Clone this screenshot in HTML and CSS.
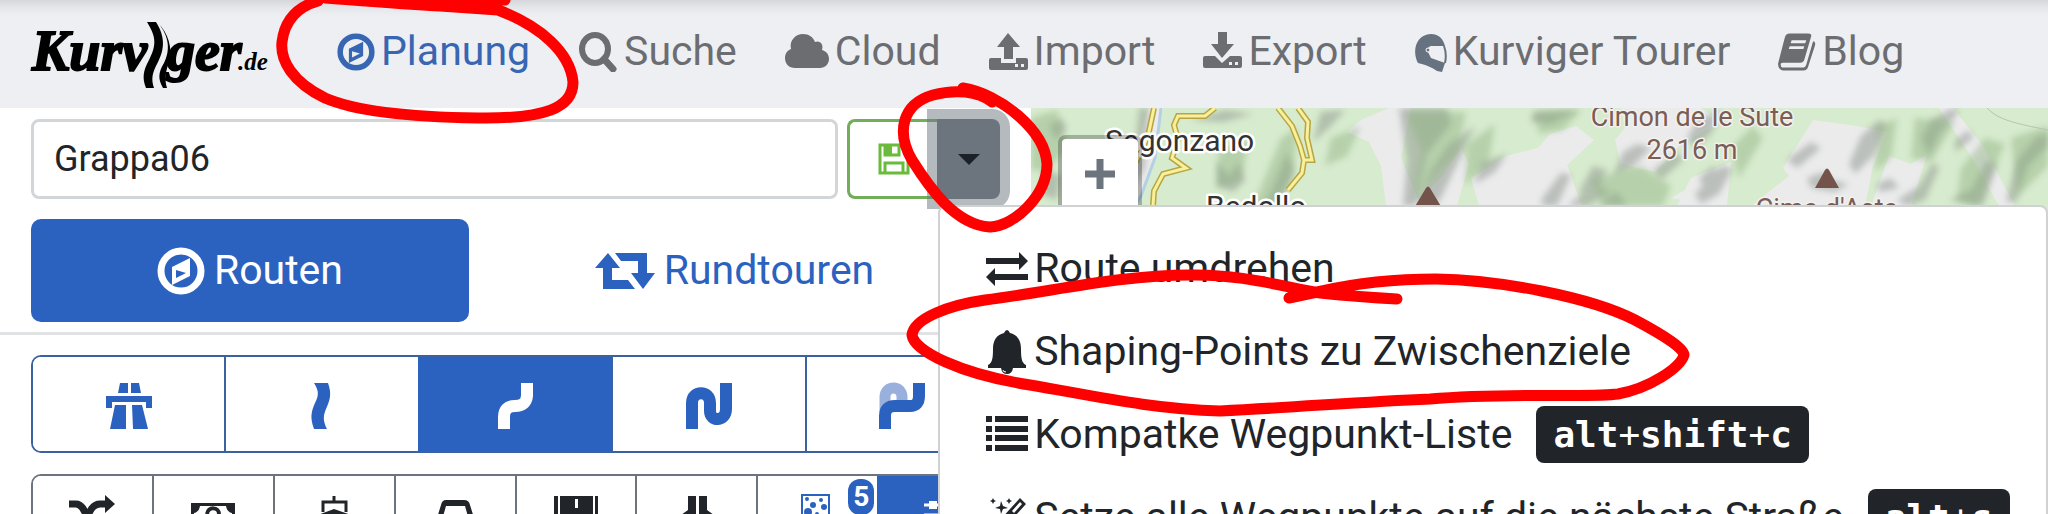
FILE: index.html
```html
<!DOCTYPE html>
<html lang="de">
<head>
<meta charset="UTF-8">
<meta name="viewport" content="width=device-width, initial-scale=1">
<title>Kurviger.de - Planung</title>
<link rel="stylesheet" href="styles.css">
</head>
<body>
<svg class="defs" width="0" height="0" aria-hidden="true">
  <symbol id="compass" viewBox="0 0 48 48">
    <circle cx="24" cy="24" r="20" fill="none" stroke="currentColor" stroke-width="7"/>
    <path fill="currentColor" fill-rule="evenodd" d="M33 11v18L15 38V20zM19 23v8l10-5z"/>
  </symbol>
</svg>

<header class="navbar">
  <a class="brand" href="#" aria-label="Kurviger.de">
    <svg width="240" height="76" viewBox="0 0 240 76">
      <text class="logo" x="4" y="52">Kurv</text>
      <path d="M119 4h9c10 16 8 28 2 40-6 11-7 17-4 26h-8c-4-10-3-17 3-28 7-14 8-22-2-38z"/>
      <path d="M130 5c12 14 12 28 6 40-6 10-6 16-1 25h4c-3-10-1-17 2-26 4-14-1-29-11-39z"/>
      <text class="logo" x="139" y="52">ger</text>
      <text class="logo_de" x="210" y="52">.de</text>
    </svg>
  </a>
  <nav class="nav">
    <a class="active" href="#"><svg width="38" height="38"><use href="#compass"/></svg>Planung</a>
    <a href="#"><svg width="40" height="40" viewBox="0 0 40 40"><ellipse cx="17" cy="17" rx="13" ry="14" fill="none" stroke="currentColor" stroke-width="6"/><path d="M26 27l9 10" stroke="currentColor" stroke-width="7" stroke-linecap="round"/></svg>Suche</a>
    <a href="#"><svg width="44" height="40" viewBox="0 0 44 40"><path fill="currentColor" d="M10 36C4 36 0 32 0 26c0-5 3-8 6-9C4 8 11 2 18 2c6 0 10 3 12 8 5-2 9 2 7 8 4 1 7 4 7 9 0 5-4 9-9 9z"/></svg>Cloud</a>
    <a href="#"><svg width="39" height="40" viewBox="0 0 39 40"><path fill="currentColor" fill-rule="evenodd" d="M19 1l12 14h-7v12h-9V15H8zM2 26h10v5h15v-5h10q2 0 2 2v8q0 2-2 2H2q-2 0-2-2v-8q0-2 2-2zM26 32v3h3v-3zM32 32v3h3v-3z"/></svg>Import</a>
    <a href="#"><svg width="39" height="40" viewBox="0 0 39 40"><path fill="currentColor" fill-rule="evenodd" d="M15 0h9v12h7L19 26 8 12h7zM2 24h10l7 7 8-7h10q2 0 2 2v8q0 2-2 2H2q-2 0-2-2v-8q0-2 2-2zM26 30v3h3v-3zM32 30v3h3v-3z"/></svg>Export</a>
    <a href="#"><svg width="32" height="40" viewBox="0 0 32 40"><path fill="#66727f" d="M16 2c7 0 12 4 14 12H16q-4 1-3 6l3 6 14 5-3 9-5-1C16 35 11 33 3 31-3 20 0 3 16 2z"/><path fill="none" stroke="#66727f" stroke-width="2" d="M29 14q3 8 1 17"/><circle cx="13" cy="18" r="2" fill="#66727f" stroke="#fff"/></svg>Kurviger Tourer</a>
    <a href="#"><svg width="38" height="40" viewBox="0 0 39 40"><path fill="currentColor" fill-rule="evenodd" d="M12 1h19q4 0 3 3l-7 24q-1 3-4 3H5q-3 0-2 3 0 2 3 2h19q3 0 4-3l7-24q3 1 2 4l-7 22q-1 4-5 4H5q-5-1-5-7L7 5q1-4 5-4zM14 8l-1 3h15l1-3zM12 14l-1 3h15l1-3z"/></svg>Blog</a>
  </nav>
</header>

<main class="main">
  <section class="sidebar">
    <div class="row name_row">
      <input class="text" type="text" value="Grappa06" aria-label="Routenname">
      <div class="btn_group">
        <button class="save" type="button" aria-label="Speichern"><svg width="32" height="32" viewBox="0 0 32 32"><path fill="none" stroke="currentColor" stroke-width="3" d="M2 2h21l7 7v21H2zM7 2v10h14V2M7 30V20h18v10"/><path fill="currentColor" d="M6 1h8v11H6z"/></svg></button>
        <div class="dropdown">
          <button class="toggle" type="button" aria-label="Weitere Aktionen" aria-expanded="true"><i class="caret"></i></button>
          <ul class="menu">
            <li><a href="#"><svg width="42" height="42" viewBox="0 0 42 42"><path fill="currentColor" d="M0 10h33V4l9 9-9 9v-6H0zM42 26H9v-6L0 29l9 9v-6h33z"/></svg>Route umdrehen</a></li>
            <li><a href="#"><svg width="42" height="44" viewBox="0 0 42 44"><path fill="currentColor" d="M18 3q3-6 6 0c8 2 11 8 11 16 0 10 1 14 5 16v3H2v-3c4-2 5-6 5-16C7 11 10 5 18 3zM15 38h12q-1 6-6 6t-6-6z"/><path d="M17 40q0 2 3 2" fill="none" stroke="#fff"/></svg>Shaping-Points zu Zwischenziele</a></li>
            <li><a href="#"><svg width="42" height="42" viewBox="0 0 42 42"><path fill="currentColor" d="M0 2h6v6H0zM9 2h33v6H9zM0 12h6v6H0zM9 12h33v6H9zM0 21h6v6H0zM9 21h33v6H9zM0 31h6v6H0zM9 31h33v6H9z"/></svg>Kompatke Wegpunkt-Liste <kbd><b>alt</b>+<b>shift</b>+<b>c</b></kbd></a></li>
            <li><a href="#"><svg width="42" height="42" viewBox="0 0 42 42"><path fill="currentColor" fill-rule="evenodd" d="M34 1l6 6L10 40l-6-6zM34 5l-8 9 2 2 8-9zM15 4l2 5 5 2-5 1-2 5-1-5-5-1 5-2zM7 1l1 2 2 1-2 1-1 2-1-2-2-1 2-1zM23 1l1 2 2 1-2 1-1 2-1-2-2-1 2-1zM37 18l1 2 2 1-2 1-1 2-1-2-2-1 2-1z"/></svg>Setze alle Wegpunkte auf die nächste Straße <kbd><b>alt</b>+<b>s</b></kbd></a></li>
          </ul>
        </div>
      </div>
    </div>

    <div class="row tabs">
      <button class="tab on" type="button"><svg width="48" height="48"><use href="#compass"/></svg>Routen</button>
      <button class="tab" type="button"><svg width="60" height="36" viewBox="0 0 60 36"><path fill="currentColor" d="M13 0l12 15h-8v12h16l7 9H8V15H0zM20 0h32v20h8L48 36 36 20h7V8H26z"/></svg>Rundtouren</button>
    </div>

    <div class="options">
      <div class="group curves">
        <button type="button" aria-label="Schnellste"><svg width="48" height="48" viewBox="0 0 48 48"><path fill="currentColor" d="M15 1h8v10H13zM26 1h8l2 10H26zM1 14h46v12h-6v-6H7v6H1zM10 23h11v24H5zM27 23h10l6 24H28z"/></svg></button>
        <button type="button" aria-label="Schnell und kurvig"><svg width="48" height="48" viewBox="0 0 48 48"><path fill="currentColor" d="M16 1h14c4 11 2 17-2 26-3 7-3 12 1 20H16c-4-11-3-17 1-26 4-8 4-12-1-20z"/></svg></button>
        <button class="on" type="button" aria-label="Kurvig"><svg width="48" height="48" viewBox="0 0 48 48"><path fill="none" stroke="currentColor" stroke-width="12" d="M12 47V35q0-11 11-11t12-10V1"/></svg></button>
        <button type="button" aria-label="Extrakurvig"><svg width="48" height="48" viewBox="0 0 48 48"><path fill="none" stroke="currentColor" stroke-width="12" d="M7 47V21c0-13 18-13 18 0v8c0 11 16 11 16-2V1"/></svg></button>
        <button type="button" aria-label="Keine Mautstraßen"><svg width="48" height="48" viewBox="0 0 48 48"><path fill="none" stroke="#9ab0dc" stroke-width="11" d="M7 30V15c0-12 17-12 17 0v4"/><path fill="none" stroke="currentColor" stroke-width="12" d="M7 47V34q0-10 10-10h15q9 0 9-10V1"/></svg></button>
      </div>

      <div class="group avoid">
        <button type="button" aria-label="Alternativen"><svg width="48" height="48" viewBox="0 0 48 48"><path fill="none" stroke="currentColor" stroke-width="7" d="M1 9h7c12 0 10 26 22 26h8M1 35h7c12 0 10-26 24-26h6"/><path fill="currentColor" d="M37 0l10 9-10 9zM37 26l10 9-10 9z"/></svg></button>
        <button type="button" aria-label="Maut vermeiden"><svg width="48" height="48" viewBox="0 0 48 48"><path fill="currentColor" fill-rule="evenodd" d="M2 8h44v30H2zM11 11q-1 6-6 7v11q5 1 6 6h26q1-5 6-6V18q-5-1-6-7z"/><path fill="none" stroke="currentColor" stroke-width="4" d="M18 19c1-8 12-7 12 0 0 5-6 4-6 11"/></svg></button>
        <button type="button" aria-label="Fähren vermeiden"><svg width="48" height="48" viewBox="0 0 48 48"><path fill="none" stroke="currentColor" stroke-width="3" d="M24 1v6M13 17V7h23v10"/><path fill="currentColor" d="M24 14l20 7-5 18H10L5 21z"/></svg></button>
        <button type="button" aria-label="Tunnel vermeiden"><svg width="48" height="48" viewBox="0 0 48 48"><path fill="currentColor" fill-rule="evenodd" d="M15 5h18q5 0 6 5l5 16v16H5V26l5-16q1-5 5-5zM15 11l-4 14h27l-4-14z"/></svg></button>
        <button type="button" aria-label="Autobahnen vermeiden"><svg width="48" height="48" viewBox="0 0 48 48"><path fill="currentColor" fill-rule="evenodd" d="M2 1h4v46H2zM8 1h33v46H8zM43 1h3v46h-3zM23 4v9h3V4zM23 19v9h3v-9z"/></svg></button>
        <button type="button" aria-label="Bundesstraßen vermeiden"><svg width="48" height="48" viewBox="0 0 48 48"><path fill="currentColor" d="M15 1h8v46H8V20l7-5zM26 1h8v14l7 5v27H26z"/></svg></button>
        <button type="button" aria-label="Unbefestigte Straßen vermeiden"><svg class="gravel" width="30" height="50" viewBox="0 0 30 50"><path fill="none" stroke="#2b62bf" stroke-width="2" d="M1 1h27v48H1z"/><g fill="#2b62bf"><circle cx="6" cy="5" r="2"/><circle cx="20" cy="6" r="2"/><circle cx="12" cy="11" r="3"/><circle cx="23" cy="13" r="3"/><circle cx="7" cy="18" r="4"/><circle cx="16" cy="20" r="2"/></g></svg><span class="badge">5</span></button>
        <button class="on" type="button" aria-label="Einstellungen"><svg width="30" height="48" viewBox="0 0 30 48"><path stroke="currentColor" stroke-width="3" d="M0 10h30M0 20h30"/><path fill="currentColor" d="M5 6h8v8H5z"/></svg></button>
      </div>
    </div>
  </section>

  <section class="map" aria-label="Karte">
    <svg class="terrain" viewBox="0 0 1017 406" preserveAspectRatio="xMinYMin slice">
      <defs>
        <filter id="soft" x="-20%" y="-20%" width="140%" height="140%"><feGaussianBlur stdDeviation="3"/></filter>
      </defs>
      <rect width="1017" height="406" fill="#d7ebce"/>
      <!-- rock -->
      <g fill="#ebebec">
        <path d="M118 0h14l-8 45-19 53H95l-5-20z"/>
        <path d="M330 12l28-12h22l-10 50 20 48h-35l-5-40-12-24-22-10zM380 98l30-28 20-30 8 16-12 42z"/>
        <path d="M448 98l-8-28 35-22 32-8 12-14 26-8 18 14-30 28-22 38zM590 0h80l20 14-40 22-26 28-34-8-6-24 10-12z"/>
        <path d="M505 40l30 14 16 44h-62zM660 70l40-16-4 44h-50zM640 90l25-14 20 22z"/>
        <path d="M752 60l30-48 44 6 30 6-14 34-8 40H720l38-30zM858 48l22 8 16-10-16 52h-40zM908 0h14l30 38 32 60h-16l-28-50z"/>
      </g>
      <!-- hill shading -->
      <g filter="url(#soft)" fill="#8c948c" opacity=".5">
        <path d="M18 18l12-8 6 10-10 12zM12 60l18 8-4 24-16-6zM108 0h10l-4 60-14 24 4-40zM88 70l14-10-6 38H84z"/>
        <path d="M186 52l12 16 10-14 6 18-12 12-16-6zM160 12l34-10 28 4-30 8zM240 84l16-40 7 18-14 36h-17zM290 4l24-2-14 16-18 16z"/>
        <path d="M368 0h48l4 16-24 30-12 52h-12l4-46zM400 62l18-26 26-18-12 26-24 50h-24zM450 54l26-8-12 18-20 12z"/>
        <path d="M502 4l46-2-28 14-20-2zM510 92l20-27 10 2-14 31h-14zM548 84l14-26 14 4-12 26zM566 96l20-12 10 14z"/>
        <path d="M592 44l14-8 14 4-20 20-18 8zM622 62l24-18 6 8-22 20zM656 30l12-20 22-6-10 22-16 14zM536 98l26-20 18 4-22 16z"/>
        <path d="M664 86l26-28 12 2-14 26-18 10zM668 70l14-12 4 6-14 14zM756 52l24-18 10 6-24 20zM776 70l16-6 8 8 18 4-14 8-24-4z"/>
        <path d="M818 56l12-28 18-16 8 4-14 32-18 18zM846 76l14-6 8 10-20 4zM866 92l22-14 14-24 6 6-14 32-18 6z"/>
        <path d="M890 30l10-18 22-12 6 4-18 20-12 24zM924 32l14-10 4 8-18 14zM918 92l22-10 16-30 10 4-14 42zM986 52l18-22 13-6v14l-20 20-12 36h-10z"/>
      </g>
      <g filter="url(#soft)" fill="#8fb181" opacity=".45">
        <path d="M375 4h60l-8 40-20 20-26 28 10-48zM436 36l28-20-6 36-24 26zM504 4l46-2-18 20-24 4zM560 72l50-14 30 20-8 20h-60zM700 40l22-22 10 12-24 40zM846 20l20-10-6 40-16 14zM884 10l40 4-24 40-20-4zM930 60l24-30 20 6-28 62-20-6zM980 30l37-12v40l-30 30z"/>
        <path d="M0 10l26-8 10 40-22 20H0zM188 40l30-8-8 40-24 8zM250 30l16-10-4 50-20 28h-20zM300 30l30-12-14 30-22 10z"/>
      </g>
      <path d="M130 0l-6 50-14 38-6 10" fill="none" stroke="#b4d0e4" stroke-width="3"/>
      <path d="M956 0c10 10 20 14 61 22" fill="none" stroke="#b8c4b0" stroke-width="1"/>
      <!-- roads -->
      <g fill="none" stroke="#b7a545" stroke-width="6"><path d="M123 0l-6 28-12 26M184 0l-10 8h-27l-4 9 4 14-6 19 14 10-23 6-9 17-1 15M247 0l14 18 8 20 4 14-2 13-14 17M267 0l10 14-1 16 5 22h-8"/></g>
      <g fill="none" stroke="#f8f09a" stroke-width="3"><path d="M123 0l-6 28-12 26M184 0l-10 8h-27l-4 9 4 14-6 19 14 10-23 6-9 17-1 15M247 0l14 18 8 20 4 14-2 13-14 17M267 0l10 14-1 16 5 22h-8"/></g>
      <path fill="#74544a" d="M395 80q2-3 4 0l12 20h-28zM794 62q2-3 4 0l10 18h-24z"/>
      <text class="place" x="74" y="43">Segonzano</text>
      <text class="place" x="175" y="109">Bedollo</text>
      <text class="peak" x="661" y="18" text-anchor="middle">Cimon de le Sute</text>
      <text class="peak" x="661" y="51" text-anchor="middle">2616 m</text>
      <text class="peak" x="796" y="110" text-anchor="middle">Cima d'Asta</text>
    </svg>
    <button class="zoom_in" type="button" aria-label="Vergrößern"><svg width="30" height="30" viewBox="0 0 30 30"><path d="M15 0v30M0 15h30" stroke="currentColor" stroke-width="7"/></svg></button>
  </section>
</main>

<!-- pen marks -->
<svg class="pen" viewBox="0 0 2048 514" preserveAspectRatio="xMinYMin meet" aria-hidden="true">
  <path d="M430-2L505 0M325-2C370 1 400 4 440 6T498 10C540 26 570 52 573 82C573 108 545 119 478 118C405 117 355 111 325 98C292 82 280 60 282 42Q286 10 318 1"/>
  <path d="M963 88C1000 94 1045 130 1047 164C1047 195 1015 226 990 227C955 225 929 187 912 160C896 132 902 104 933 95C955 89 978 91 992 102"/>
  <path d="M1289 298L1322 291C1365 281 1400 279 1436 279C1500 280 1590 297 1635 320Q1684 346 1684 355C1680 368 1650 388 1618 394C1590 398 1510 392 1430 399C1360 402 1300 407 1220 411C1150 409 1090 395 1030 385C960 374 914 351 912 335C914 318 950 305 985 300C1050 292 1120 275 1190 275C1240 274 1280 286 1320 293Q1360 297 1397 299"/>
</svg>
</body>
</html>
```
FILE: styles.css
```css
*{ padding:0; margin:0; box-sizing:border-box;}
body{ height:100vh; display:flex; flex-direction:column; overflow:hidden; background:#fff; color:#212529; font:41px/1.5 Roboto,"Open Sans",sans-serif;}
button,input{ font:inherit; color:inherit;}
button{ cursor:pointer;}
a{ color:inherit; text-decoration:none;}
ul{ list-style:none;}
svg{ display:block; flex:none;}
.defs{ position:absolute;}

/*navbar*/
.navbar{ position:relative; z-index:2; flex:none; display:flex; align-items:center; gap:69px; height:108px; padding:0 28px 4px; background:linear-gradient(#d6d7da,#e6e7eb 8px,#eeeff3 16px);}
.brand{ padding-top:8px;}
.logo,.logo_de{ font-family:"Liberation Serif",serif; font-weight:bold; font-style:italic; fill:#000;}
.logo{ font-size:56px; stroke:#000; stroke-width:2px;}
.logo_de{ font-size:25px;}
.nav{ display:flex; gap:48px; color:#6c6d70; white-space:nowrap;}
.nav a{ display:flex; align-items:center; gap:6px;}
.nav .active{ color:#3766b2;}

/*sidebar*/
.main{ flex:1; min-height:0; display:flex;}
.sidebar{ position:relative; z-index:1; width:50.35%; flex:none; background:#fff;}
.row{ display:flex; margin:0 31px;}
.name_row{ gap:9px; margin-top:11px; height:80px;}
.text{ flex:1; min-width:0; padding:0 20px; border:3px solid #d3d6d9; border-radius:8px; background:#fff; font-size:36px; outline:none;}
.btn_group{ display:flex;}
.save{ width:90px; padding-left:28px; border:3px solid #72ad58; border-right:0; border-radius:8px 0 0 8px; background:#fff; color:#6aba3c;}
.dropdown{ position:relative; z-index:2; display:flex;}
.toggle{ display:flex; align-items:center; justify-content:center; width:63px; border:0; border-radius:0 8px 8px 0; background:#6c757d; box-shadow:0 0 0 10px rgba(108,117,125,.5);}
.caret{ border:11px solid transparent; border-top-color:#1c2127; border-bottom:0;}

.menu{ position:absolute; top:86px; left:1px; padding:20px 0; border:2px solid #d0d1d2; border-radius:8px; background:#fff;}
.menu a{ display:flex; align-items:center; gap:6px; height:83px; padding:0 36px 0 46px; white-space:nowrap;}
kbd{ margin-left:18px; padding:0 17px; border-radius:8px; background:#212529; color:#fff; font:36px/57px "DejaVu Sans Mono",monospace;}

.tabs{ margin-top:20px; height:103px;}
.tab{ flex:1 1 auto; display:flex; align-items:center; justify-content:center; gap:9px; border:0; border-radius:10px; background:none; color:#2b62bf;}
.tab.on{ background:#2b62bf; color:#fff;}

.options{ display:flex; flex-direction:column; gap:21px; margin-top:10px; padding:20px 31px; border-top:3px solid #e0e2e4;}
.group{ display:flex; border:2px solid; border-radius:10px; overflow:hidden;}
.group button{ position:relative; flex:1 1 0; display:flex; align-items:center; justify-content:center; border:0; border-left:2px solid; background:#fff;}
.group button:first-child{ border-left:0;}
.curves{ height:98px; border-color:#3a62a0;}
.curves button{ padding-top:4px; border-color:#3a62a0; color:#2b62bf;}
.avoid{ height:90px; border-color:#6c757d;}
.avoid button{ border-color:#6c757d; color:#212529;}
.group .on{ border-color:#2b62bf; background:#2b62bf; color:#fff;}
.gravel{ margin-right:4px;}
.badge{ position:absolute; top:3px; right:3px; width:26px; border-radius:12px; background:#2b62bf; color:#fff; font-weight:bold; font-size:28px; line-height:36px; text-align:center;}

/*map*/
.map{ position:relative; flex:1; overflow:hidden; background:#d7ebce;}
.terrain{ width:100%; height:100%;}
.place{ font-size:30px; fill:#333; stroke:#fff; stroke-width:5px; stroke-linejoin:round; paint-order:stroke;}
.peak{ font-size:27px; fill:#7a5d54; stroke:#f3f1ef; stroke-width:3px; stroke-linejoin:round; paint-order:stroke;}
.zoom_in{ position:absolute; top:27px; left:27px; display:flex; align-items:center; justify-content:center; width:84px; height:86px; padding-bottom:8px; border:4px solid rgba(0,0,0,.25); border-radius:8px; background:#fff; background-clip:padding-box; color:#6c757d;}

.pen{ position:absolute; z-index:3; top:0; left:0; width:100%; pointer-events:none;}
.pen path{ fill:none; stroke:#f00; stroke-width:11px; stroke-linecap:round; stroke-linejoin:round;}
```
